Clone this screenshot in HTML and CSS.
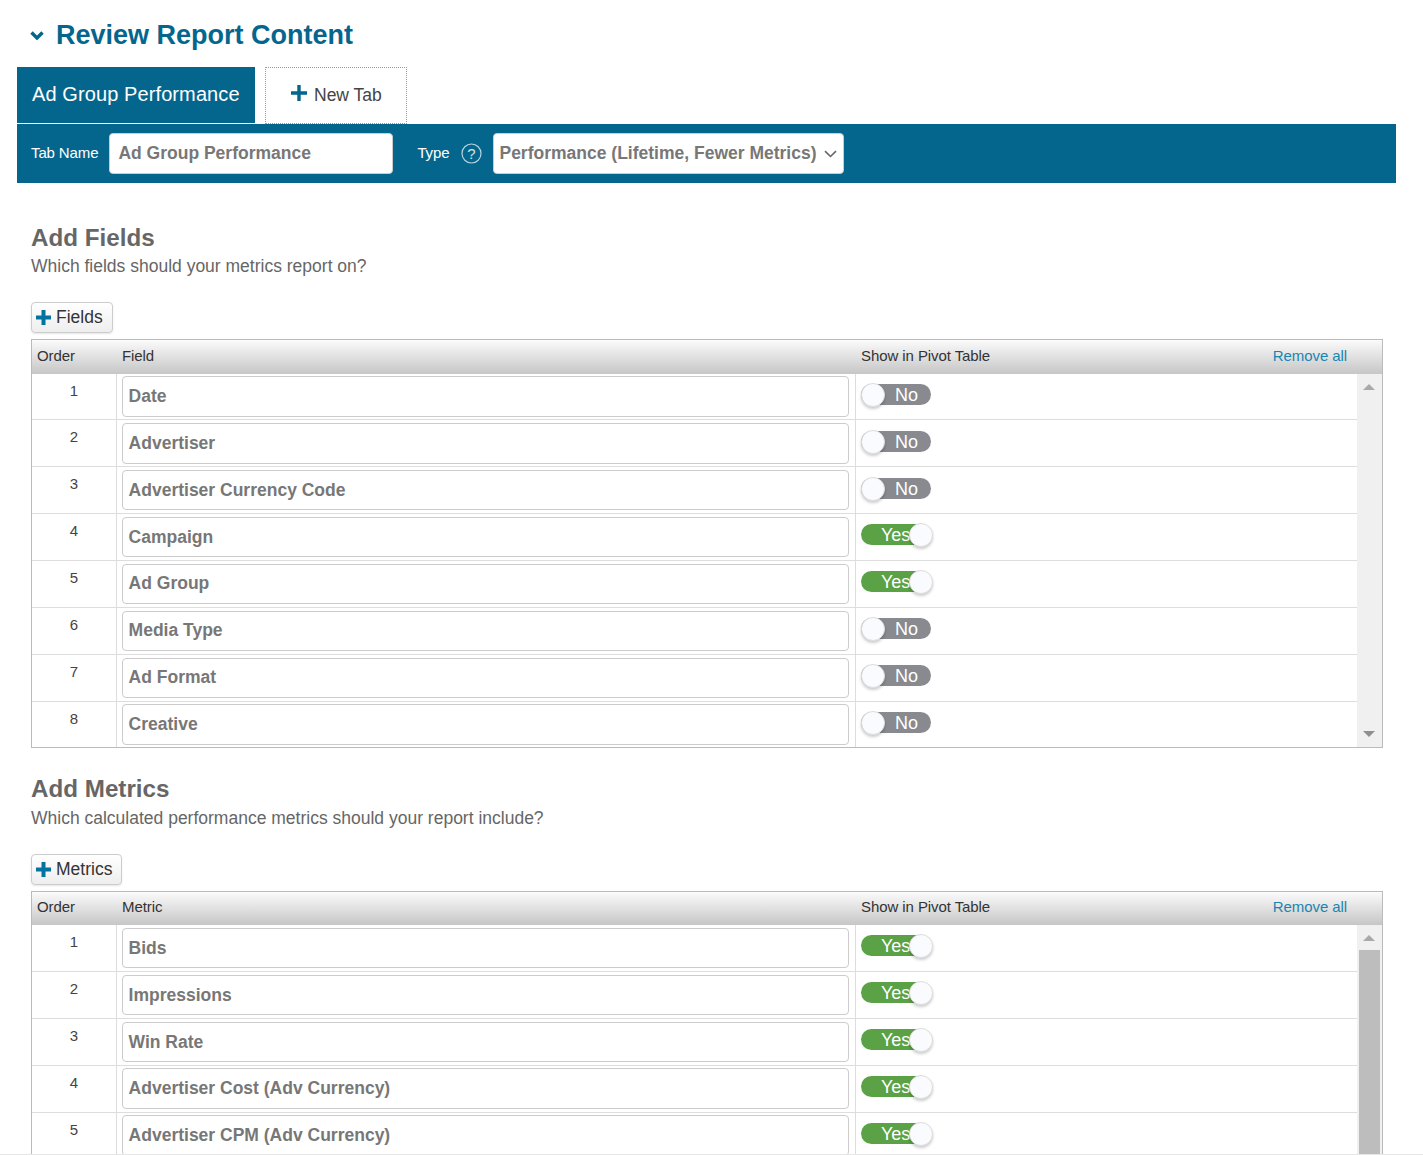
FILE: index.html
```html
<!DOCTYPE html>
<html lang="en">
<head>
<meta charset="utf-8">
<title>Review Report Content</title>
<link rel="stylesheet" href="styles.css">
</head>
<body>
<main class="page">
  <h1 class="title">
    <svg class="title-chev" width="14" height="9" viewBox="0 0 14 9"><path d="M1.5 1.5 7 7l5.5-5.5" fill="none" stroke="#05668d" stroke-width="3.4"/></svg>
    Review Report Content
  </h1>
  <div class="tabs">
    <div class="tab-active">Ad Group Performance</div>
    <div class="tab-new">
      <svg class="tab-plus" width="16" height="16" viewBox="0 0 16 16"><path d="M8 0v16M0 8h16" stroke="#05668d" stroke-width="3.4"/></svg>
      <span>New Tab</span>
    </div>
  </div>
  <div class="bar">
    <span class="bar-label">Tab Name</span>
    <div class="bar-input">Ad Group Performance</div>
    <span class="bar-label type-label">Type</span>
    <svg class="help" width="21" height="21" viewBox="0 0 21 21"><circle cx="10.5" cy="10.5" r="9.5" fill="none" stroke="#b5d3df" stroke-width="1.2"/><text x="10.5" y="15.5" text-anchor="middle" class="help-q">?</text></svg>
    <div class="bar-select">Performance (Lifetime, Fewer Metrics)
      <svg width="13" height="8" viewBox="0 0 13 8"><path d="M1 1.2 6.5 6.5 12 1.2" fill="none" stroke="#666" stroke-width="1.6"/></svg>
    </div>
  </div>

  <section class="section section-fields">
    <h2 class="sec-title">Add Fields</h2>
    <p class="sec-sub">Which fields should your metrics report on?</p>
    <button class="add-btn"><svg width="15" height="15" viewBox="0 0 15 15"><path d="M7.5 0v15M0 7.5h15" stroke="#05739f" stroke-width="4"/></svg>Fields</button>
    <div class="table table-fields">
      <div class="thead">
        <span class="th-order">Order</span><span class="th-name">Field</span><span class="th-pivot">Show in Pivot Table</span><a class="remove">Remove all</a>
      </div>
      <div class="tbody">
        <div class="rows">
          <div class="row row-first"><div class="c-order">1</div><div class="c-name"><div class="name-box">Date</div></div><div class="c-pivot"><div class="toggle off"><span>No</span><i></i></div></div></div>
          <div class="row"><div class="c-order">2</div><div class="c-name"><div class="name-box">Advertiser</div></div><div class="c-pivot"><div class="toggle off"><span>No</span><i></i></div></div></div>
          <div class="row"><div class="c-order">3</div><div class="c-name"><div class="name-box">Advertiser Currency Code</div></div><div class="c-pivot"><div class="toggle off"><span>No</span><i></i></div></div></div>
          <div class="row"><div class="c-order">4</div><div class="c-name"><div class="name-box">Campaign</div></div><div class="c-pivot"><div class="toggle on"><span>Yes</span><i></i></div></div></div>
          <div class="row"><div class="c-order">5</div><div class="c-name"><div class="name-box">Ad Group</div></div><div class="c-pivot"><div class="toggle on"><span>Yes</span><i></i></div></div></div>
          <div class="row"><div class="c-order">6</div><div class="c-name"><div class="name-box">Media Type</div></div><div class="c-pivot"><div class="toggle off"><span>No</span><i></i></div></div></div>
          <div class="row"><div class="c-order">7</div><div class="c-name"><div class="name-box">Ad Format</div></div><div class="c-pivot"><div class="toggle off"><span>No</span><i></i></div></div></div>
          <div class="row row-last"><div class="c-order">8</div><div class="c-name"><div class="name-box">Creative</div></div><div class="c-pivot"><div class="toggle off"><span>No</span><i></i></div></div></div>
        </div>
        <div class="scroll">
          <b class="arrow-up"></b>
          <b class="arrow-down"></b>
        </div>
      </div>
    </div>
  </section>

  <section class="section section-metrics">
    <h2 class="sec-title">Add Metrics</h2>
    <p class="sec-sub">Which calculated performance metrics should your report include?</p>
    <button class="add-btn"><svg width="15" height="15" viewBox="0 0 15 15"><path d="M7.5 0v15M0 7.5h15" stroke="#05739f" stroke-width="4"/></svg>Metrics</button>
    <div class="table table-open">
      <div class="thead">
        <span class="th-order">Order</span><span class="th-name">Metric</span><span class="th-pivot">Show in Pivot Table</span><a class="remove">Remove all</a>
      </div>
      <div class="tbody">
        <div class="rows">
          <div class="row"><div class="c-order">1</div><div class="c-name"><div class="name-box">Bids</div></div><div class="c-pivot"><div class="toggle on"><span>Yes</span><i></i></div></div></div>
          <div class="row"><div class="c-order">2</div><div class="c-name"><div class="name-box">Impressions</div></div><div class="c-pivot"><div class="toggle on"><span>Yes</span><i></i></div></div></div>
          <div class="row"><div class="c-order">3</div><div class="c-name"><div class="name-box">Win Rate</div></div><div class="c-pivot"><div class="toggle on"><span>Yes</span><i></i></div></div></div>
          <div class="row"><div class="c-order">4</div><div class="c-name"><div class="name-box">Advertiser Cost (Adv Currency)</div></div><div class="c-pivot"><div class="toggle on"><span>Yes</span><i></i></div></div></div>
          <div class="row"><div class="c-order">5</div><div class="c-name"><div class="name-box">Advertiser CPM (Adv Currency)</div></div><div class="c-pivot"><div class="toggle on"><span>Yes</span><i></i></div></div></div>
        </div>
        <div class="scroll">
          <b class="arrow-up"></b>
          <div class="thumb"></div>
        </div>
      </div>
    </div>
  </section>
</main>
<div class="fold"></div>
</body>
</html>
```
FILE: styles.css
```css
* { box-sizing: border-box; }
html, body { margin: 0; height: 1155px; overflow: hidden; background: #fff; }
body { font-family: "Liberation Sans", Arial, sans-serif; color: #333; position: relative; }
.page { padding: 0 27px 0 17px; }

.title { margin: 0; height: 67px; padding: 19px 0 0 13px; display: flex; align-items: flex-start; gap: 12px; font-size: 27px; line-height: 32px; font-weight: 700; color: #05668d; }
.title-chev { margin-top: 12px; }

.tabs { display: flex; height: 57px; gap: 10px; }
.tab-active { width: 238px; height: 56px; background: #05668d; color: #fff; font-size: 20px; line-height: 54px; padding-left: 15px; letter-spacing: 0.1px; }
.tab-new { width: 142px; height: 57px; border: 1px dotted #999; display: flex; align-items: center; gap: 7px; padding-left: 25px; font-size: 17.5px; color: #444; outline: 4px solid #fff; outline-offset: -5px; }
.tab-plus { margin-top: -6px; }

.bar { height: 59px; background: #05668d; display: flex; align-items: center; padding: 0 0 2px 14px; color: #fff; }
.bar-label { font-size: 15px; letter-spacing: -0.12px; }
.bar-input { width: 284px; height: 41px; margin-left: 11px; margin-top: 2px; background: #fff; border: 1px solid #ccc; border-radius: 4px; padding-left: 8px; font-size: 17.5px; line-height: 39px; font-weight: 700; color: #777; }
.type-label { margin-left: 24px; }
.help { margin-left: 12px; margin-top: 2px; }
.help-q { font: 15px "Liberation Sans", sans-serif; fill: #cfe2ea; }
.bar-select { width: 351px; height: 41px; margin-left: 11px; margin-top: 2px; background: #fff; border: 1px solid #ccc; border-radius: 4px; padding-left: 5px; font-size: 17.5px; line-height: 37px; font-weight: 700; color: #777; display: flex; align-items: center; gap: 7px; white-space: nowrap; }

.section { padding-left: 14px; }
.section-fields { padding-top: 41px; }
.section-metrics { padding-top: 27px; }
.sec-title { margin: 0; font-size: 24.2px; line-height: 28px; font-weight: 700; color: #666; }
.sec-sub { margin: 0; font-size: 17.5px; line-height: 28px; color: #666; }
.section-metrics .sec-sub { margin-top: 1px; }
.add-btn { display: flex; align-items: center; gap: 5px; height: 31px; margin-top: 22px; padding: 0 9px 0 4px; border: 1px solid #ccc; border-radius: 4px; background: linear-gradient(#fff, #eee); box-shadow: 0 1px 2px rgba(0,0,0,.1); font: 17.5px "Liberation Sans", sans-serif; color: #333; }

.table { width: 1352px; margin-top: 6px; border: 1px solid #bbb; }
.table-open { border-bottom: 0; }
.thead { height: 34px; padding-bottom: 4px; display: flex; align-items: center; background: linear-gradient(#fbfbfb, #c6c6c6); font-size: 15px; letter-spacing: -0.08px; color: #333; }
.table-open .thead { height: 33px; padding-bottom: 5px; }
.th-order { width: 90px; padding-left: 5px; }
.th-name { width: 739px; }
.th-pivot { flex: 1; }
.remove { margin-right: 35px; color: #1a85b0; }
.tbody { display: flex; }
.rows { width: 1325px; flex: none; }
.row { display: flex; height: 47px; border-bottom: 1px solid #ddd; }
.row-first { height: 46px; }
.row-last { height: 45px; border-bottom: 0; }
.c-order { width: 85px; border-right: 1px solid #ddd; text-align: center; font-size: 15px; line-height: 34px; color: #444; }
.c-name { width: 739px; padding: 3px 6px 0 5px; border-right: 1px solid #ddd; }
.name-box { height: 40px; border: 1px solid #ccc; border-radius: 4px; padding-left: 5.6px; font-size: 17.5px; line-height: 38px; font-weight: 700; color: #777; }
.c-pivot { flex: 1; padding: 10px 0 0 5px; }

/* The source table has fractional row heights; these rows round differently. */
.table-fields .row:nth-child(1) .c-name,
.table-fields .row:nth-child(8) .c-name,
.table-open .row:nth-child(n+4) .c-name { padding-top: 2px; }
.table-fields .row:nth-child(-n+2) .name-box,
.table-fields .row:nth-child(8) .name-box,
.table-open .row:nth-child(n+4) .name-box { height: 41px; }
.table-fields .row:nth-child(n+5):nth-child(-n+7) .name-box { line-height: 36px; }
.table-fields .row:nth-child(n+2):nth-child(-n+3) .toggle { margin-top: 1px; }

.toggle { position: relative; width: 70px; height: 21px; border-radius: 11px; color: #fff; font-size: 18px; line-height: 22px; }
.toggle i { position: absolute; top: -1px; width: 24px; height: 24px; border-radius: 50%; background: #fafbff; border: 1px solid #ddd; box-shadow: 0 2px 3px rgba(0,0,0,.2); }
.toggle.off { background: #888a8f; }
.toggle.off span { position: absolute; left: 34px; }
.toggle.off i { left: 0; }
.toggle.on { background: #5aa245; }
.toggle.on span { position: absolute; left: 20px; }
.toggle.on i { left: 48px; }

.scroll { flex: 1; background: #f0f0f0; position: relative; }
.arrow-up, .arrow-down { position: absolute; left: 6px; width: 0; height: 0; border-left: 6px solid transparent; border-right: 6px solid transparent; }
.arrow-up { top: 10px; border-bottom: 6px solid #a9a9a9; }
.arrow-down { bottom: 10px; border-top: 6px solid #8f8f8f; }
.thumb { position: absolute; top: 25px; left: 2px; width: 21px; height: 400px; background: #bdbdbd; }

.fold { position: absolute; left: 0; right: 0; bottom: 0; height: 1px; background: #e6e6e6; }
```
